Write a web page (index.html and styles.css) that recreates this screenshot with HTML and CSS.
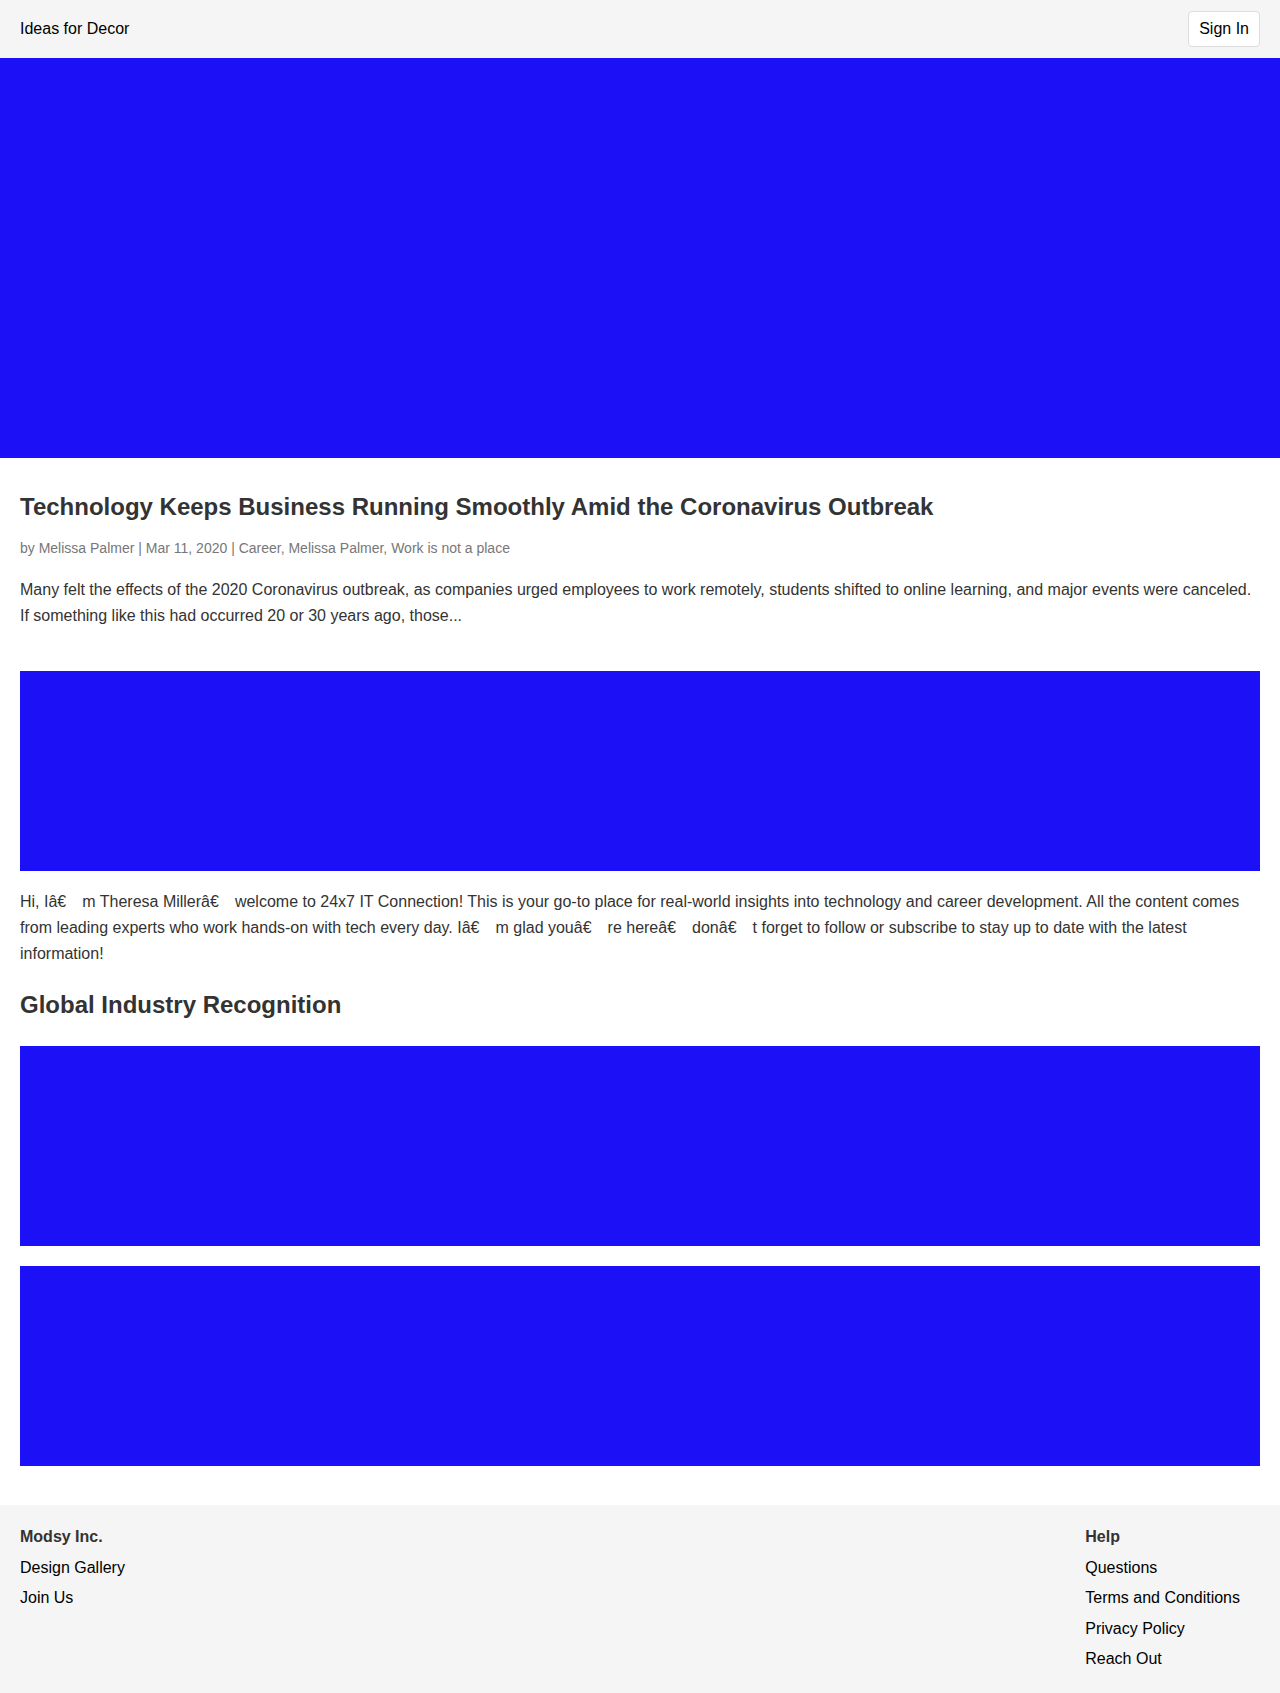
FILE: index.html
```html
<!DOCTYPE html>
<html lang="en">
<head>
<meta charset="utf-8">
<title>Ideas for Decor</title>
<link rel="stylesheet" href="styles.css">
</head>
<body>
<header class="topbar">
  <a class="brand" href="#">Ideas for Decor</a>
  <button class="signin" type="button">Sign In</button>
</header>
<div class="hero"></div>
<main class="content">
  <article class="post">
    <h1 class="post-title">Technology Keeps Business Running Smoothly Amid the Coronavirus Outbreak</h1>
    <p class="post-meta">by Melissa Palmer | Mar 11, 2020 | Career, Melissa Palmer, Work is not a place</p>
    <p class="post-excerpt">Many felt the effects of the 2020 Coronavirus outbreak, as companies urged employees to work remotely, students shifted to online learning, and major events were canceled. If something like this had occurred 20 or 30 years ago, those...</p>
  </article>
  <div class="banner banner-first"></div>
  <p class="intro">Hi, Iâ€<span class="gap"></span>m Theresa Millerâ€<span class="gap"></span>welcome to 24x7 IT Connection! This is your go-to place for real-world insights into technology and career development. All the content comes from leading experts who work hands-on with tech every day. Iâ€<span class="gap"></span>m glad youâ€<span class="gap"></span>re hereâ€<span class="gap"></span>donâ€<span class="gap"></span>t forget to follow or subscribe to stay up to date with the latest information!</p>
  <h2 class="section-title">Global Industry Recognition</h2>
  <div class="banners">
    <div class="banner"></div>
    <div class="banner"></div>
  </div>
</main>
<footer class="footer">
  <div class="footer-col">
    <div class="footer-head">Modsy Inc.</div>
    <a class="footer-link" href="#">Design Gallery</a>
    <a class="footer-link" href="#">Join Us</a>
  </div>
  <div class="footer-col footer-col-right">
    <div class="footer-head">Help</div>
    <a class="footer-link" href="#">Questions</a>
    <a class="footer-link" href="#">Terms and Conditions</a>
    <a class="footer-link" href="#">Privacy Policy</a>
    <a class="footer-link" href="#">Reach Out</a>
  </div>
</footer>
</body>
</html>
```

FILE: styles.css
```css
* { box-sizing: border-box; }
html, body { margin: 0; padding: 0; }
body {
  font-family: "Liberation Sans", Arial, Helvetica, sans-serif;
  color: #333;
  background: #fff;
  width: 1280px;
}
a { text-decoration: none; color: #000; }

.topbar {
  height: 58px;
  background: #f5f5f5;
  display: flex;
  align-items: center;
  justify-content: space-between;
  padding: 0 20px;
}
.brand { font-size: 16px; color: #000; }
.signin {
  font-family: inherit;
  font-size: 16px;
  color: #000;
  background: #fff;
  border: 1px solid #ddd;
  border-radius: 4px;
  height: 36px;
  padding: 0 10px;
  margin-top: 0;
}

.hero { height: 400px; background: #1c10f6; }

.content { padding: 35px 20px 39px; }
.post-title {
  font-size: 24px;
  line-height: 28px;
  font-weight: bold;
  margin: 0;
  color: #333;
}
.post-meta {
  font-size: 14px;
  line-height: 20px;
  color: #777;
  margin: 17px 0 0;
}
.post-excerpt, .intro {
  font-size: 16px;
  line-height: 26px;
  color: #333;
  margin: 19px 0 0;
}
.gap { display: inline-block; width: 16px; }
.banner { height: 200px; background: #1c10f6; }
.banner-first { margin-top: 42px; }
.intro { margin-top: 18px; }
.section-title {
  font-size: 24px;
  line-height: 28px;
  font-weight: bold;
  margin: 24px 0 0;
  color: #333;
}
.banners {
  display: flex;
  flex-direction: column;
  gap: 20px;
  margin-top: 27px;
}

.footer {
  background: #f5f5f5;
  display: flex;
  justify-content: space-between;
  padding: 17px 40px 19px 20px;
  min-height: 188px;
}
.footer-col { display: flex; flex-direction: column; }
.footer-head {
  font-weight: bold;
  font-size: 16px;
  line-height: 30.5px;
  color: #333;
}
.footer-link { font-size: 16px; line-height: 30.5px; color: #000; }
```
